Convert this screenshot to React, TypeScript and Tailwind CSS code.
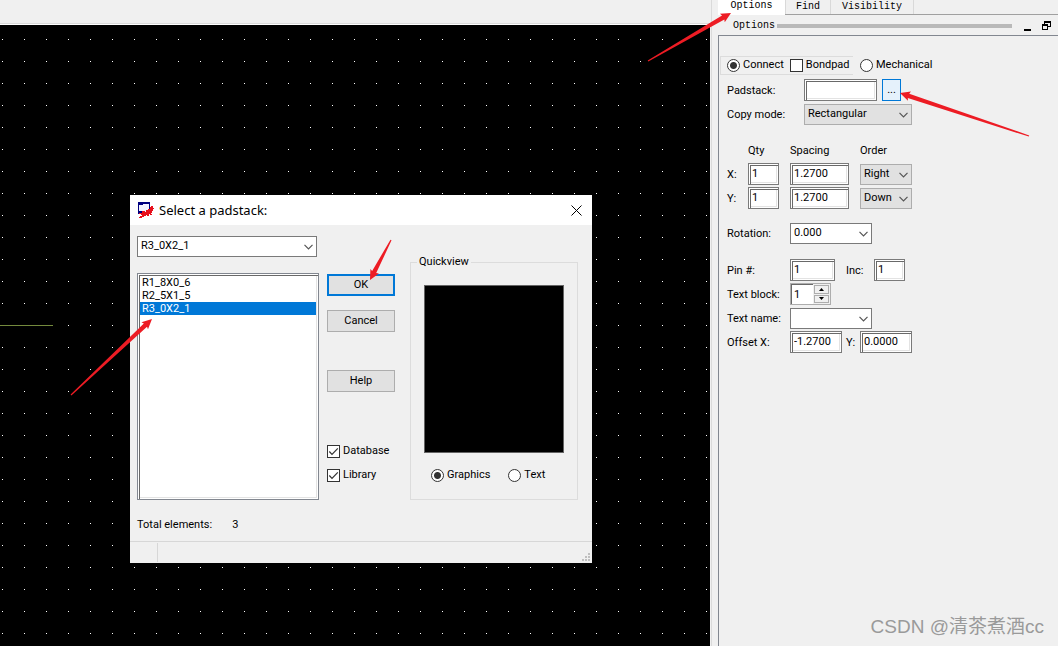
import { useState, type ReactNode } from 'react'

const sunken =
  'h-[22px] min-w-0 rounded-none border border-[#7a7a7a] bg-white px-[3px] pb-px text-black shadow-[inset_1px_1px_0_#fff,inset_2px_2px_0_#696969,inset_-1px_-1px_0_#fff,inset_-2px_-2px_0_#e3e3e3] outline-none'

function Field({ label, value, width }: { label: string; value: string; width: string }) {
  return <input aria-label={label} defaultValue={value} className={`${sunken} ${width}`} />
}

// Drop-down with its own chevron; "flat" is the grey variant that can't be typed in.
function Combo({
  label,
  options,
  width,
  flat = false,
}: {
  label: string
  options: string[]
  width: string
  flat?: boolean
}) {
  return (
    <div className={`relative ${width}`}>
      <select
        aria-label={label}
        className={`block h-[21px] w-full appearance-none rounded-none border pb-px pl-[3px] text-black outline-none ${
          flat ? 'border-[#adadad] bg-[#e1e1e1]' : 'border-[#7a7a7a] bg-white'
        }`}
      >
        {options.map((o) => (
          <option key={o}>{o}</option>
        ))}
      </select>
      <svg viewBox="0 0 9 6" className="pointer-events-none absolute top-2 right-1 h-[6px] w-[9px]" fill="none" stroke="#555">
        <path d="M.5 .8 4.5 4.8 8.5 .8" strokeWidth="1.2" />
      </svg>
    </div>
  )
}

function Radio({ name, label, checked = false }: { name: string; label: string; checked?: boolean }) {
  return (
    <label className="flex items-center gap-[3px]">
      <input
        type="radio"
        name={name}
        defaultChecked={checked}
        className="size-[13px] shrink-0 appearance-none rounded-full border border-[#333] bg-white checked:bg-[radial-gradient(circle,#333_3px,#fff_4px)]"
      />
      {label}
    </label>
  )
}

function Check({ label, checked = false }: { label: string; checked?: boolean }) {
  return (
    <label className="relative flex items-center gap-[3px]">
      <input
        type="checkbox"
        defaultChecked={checked}
        className="peer size-[13px] shrink-0 appearance-none rounded-none border border-[#333] bg-white"
      />
      <svg
        viewBox="0 0 13 13"
        className="pointer-events-none absolute left-0 hidden size-[13px] peer-checked:block"
        fill="none"
        stroke="#333"
        strokeWidth="1.2"
      >
        <path d="M2.3 6.5 5 9.3 10.8 3.3" />
      </svg>
      {label}
    </label>
  )
}

function PushButton({ children, primary = false }: { children: ReactNode; primary?: boolean }) {
  return (
    <button
      type="button"
      className={`h-[22px] w-full bg-[#e1e1e1] text-center ${
        primary ? 'border-2 border-[#0078d7]' : 'border border-[#adadad]'
      }`}
    >
      {children}
    </button>
  )
}

function Row({ label, children }: { label: string; children: ReactNode }) {
  return (
    <div className="flex h-6 items-center">
      <span className="w-[63px] shrink-0 pt-0.5">{label}</span>
      {children}
    </div>
  )
}

// Red pointer: thin at the tail, thick at the neck, with a barbed head.
function Arrow({ from, to }: { from: [number, number]; to: [number, number] }) {
  const dx = to[0] - from[0]
  const dy = to[1] - from[1]
  const len = Math.hypot(dx, dy)
  const angle = (Math.atan2(dy, dx) * 180) / Math.PI
  return (
    <path
      transform={`translate(${from[0]} ${from[1]}) rotate(${angle})`}
      d={`M0 -.6 L${len - 9} -2.3 L${len - 10} -4.8 L${len} 0 L${len - 10} 4.8 L${len - 9} 2.3 L0 .6Z`}
    />
  )
}

function Arrows() {
  return (
    <svg className="pointer-events-none absolute top-0 left-0 h-[646px] w-[1058px]" fill="#ed1c24">
      <Arrow from={[648, 61]} to={[731, 13]} />
      <Arrow from={[1029, 136]} to={[900, 93]} />
      <Arrow from={[391, 240]} to={[370, 280]} />
      <Arrow from={[71, 395]} to={[152, 319]} />
    </svg>
  )
}

function AppIcon() {
  return (
    <svg viewBox="0 0 16 16" className="size-4" shapeRendering="crispEdges">
      <path d="M0 0h12v12H0z" fill="#000080" />
      <path d="M1 2h10v8H1z" fill="#f4f4ff" />
      <path d="M1 2h4v1H1zM1 9h3v1H1z" fill="#000080" />
      <path d="M5 10h7v2H5z" fill="#fff" />
      <path
        d="M13 4h2v2h1v1h-1v2h-1v2h-1v1h1v1h-2v-1h-1v2H9v-1H8v1H6v1H4v1H1v-1h1v-1h2v-1H3v-1H1v-1h3V9h3v1h1V8h2V7h2V5h1z"
        fill="#e8101c"
      />
    </svg>
  )
}

const padstacks = ['R1_8X0_6', 'R2_5X1_5', 'R3_0X2_1']

function PadstackDialog() {
  const [selected, setSelected] = useState('R3_0X2_1')
  return (
    <section
      role="dialog"
      aria-label="Select a padstack"
      className="absolute top-[170px] left-[130px] w-[462px] bg-[#f0f0f0]"
    >
      <header className="flex h-[30px] items-center bg-white px-2">
        <AppIcon />
        <h2 className="ml-[5px] flex-1 font-['Noto_Sans',sans-serif] text-[13px]">Select a padstack:</h2>
        <button type="button" aria-label="Close" className="p-0.5">
          <svg viewBox="0 0 11 11" className="size-[11px]" stroke="#000" fill="none">
            <path d="M.5 .5 10.5 10.5M10.5 .5 .5 10.5" />
          </svg>
        </button>
      </header>

      <div className="flex items-stretch px-[7px] pt-[11px]">
        <div className="flex w-[182px] flex-col">
          <Combo label="Padstack name" options={['R3_0X2_1']} width="w-[180px]" />
          <ul
            role="listbox"
            className="mt-4 h-[227px] border border-[#828790] bg-white p-0.5 shadow-[inset_1px_1px_0_#fff,inset_2px_2px_0_#696969,inset_-1px_-1px_0_#fff,inset_-2px_-2px_0_#e3e3e3]"
          >
            {padstacks.map((p) => (
              <li
                key={p}
                role="option"
                aria-selected={p === selected}
                onClick={() => setSelected(p)}
                className={`h-[13px] pl-0.5 leading-[13px] ${p === selected ? 'bg-[#0078d7] text-white' : ''}`}
              >
                {p}
              </li>
            ))}
          </ul>
        </div>

        <div className="ml-2 flex w-[68px] flex-col pt-[38px]">
          <PushButton primary>OK</PushButton>
          <div className="mt-[14px]">
            <PushButton>Cancel</PushButton>
          </div>
          <div className="mt-[38px]">
            <PushButton>Help</PushButton>
          </div>
          <div className="mt-[51px] flex flex-col gap-2 leading-4">
            <Check label="Database" checked />
            <Check label="Library" checked />
          </div>
        </div>

        <fieldset className="mt-[19px] ml-[15px] w-[168px] border border-[#dcdcdc] px-[13px]">
          <legend className="-ml-[7px] px-0.5 leading-[14px]">Quickview</legend>
          <div className="mt-[16px] h-[168px] border border-[#646464] bg-black" />
          <div className="mt-[14px] flex gap-[18px] pl-[7px] leading-4">
            <Radio name="view" label="Graphics" checked />
            <Radio name="view" label="Text" />
          </div>
        </fieldset>
      </div>

      <p className="mt-[17px] flex gap-5 px-[7px] leading-4">
        <span>Total elements:</span>
        <span>3</span>
      </p>
      <footer className="mt-2 flex h-[22px] items-stretch justify-between border-t border-[#d7d7d7]">
        <div className="my-px w-7 border-r border-[#d7d7d7]" />
        <svg viewBox="0 0 8 8" className="mr-0.5 mb-0.5 size-2 self-end" fill="#bfbfbf">
          <path d="M6 0h2v2H6zM3 3h2v2H3zM6 3h2v2H6zM0 6h2v2H0zM3 6h2v2H3zM6 6h2v2H6z" />
        </svg>
      </footer>
    </section>
  )
}

function OptionsForm() {
  return (
    <form className="flex-1 border-t border-l border-[#828790] pt-[20px]">
      <div className="flex h-[19px] items-center">
        <div className="ml-px flex h-[19px] w-[133px] items-center border border-r-0 border-[#dcdcdc] pb-px pl-[6px]">
          <div className="flex items-center gap-[6px] whitespace-nowrap">
            <Radio name="kind" label="Connect" checked />
            <Check label="Bondpad" />
          </div>
        </div>
        <div className="ml-[7px] pb-px">
          <Radio name="kind" label="Mechanical" />
        </div>
      </div>

      <div className="mt-[3px] pl-2">
        <div className="flex h-6 items-center">
          <span className="w-[77px] pt-0.5">Padstack:</span>
          <Field label="Padstack" value="" width="w-[73px]" />
          <button type="button" className="ml-[5px] h-[22px] w-[19px] border border-[#0078d7] bg-[#e5f1fb]">
            ...
          </button>
        </div>
        <div className="flex h-6 items-center">
          <span className="w-[77px] pt-0.5">Copy mode:</span>
          <Combo label="Copy mode" options={['Rectangular', 'Polar']} width="w-[108px]" flat />
        </div>

        <div className="mt-[13px] grid w-[185px] grid-cols-[21px_42px_70px_52px] items-center">
          <span className="col-start-2 h-[23px] leading-[23px]">Qty</span>
          <span>Spacing</span>
          <span>Order</span>
          <span className="flex h-6 items-center pt-0.5">X:</span>
          <Field label="X quantity" value="1" width="w-[31px]" />
          <Field label="X spacing" value="1.2700" width="w-[59px]" />
          <Combo label="X order" options={['Right', 'Left']} width="w-[52px]" flat />
          <span className="flex h-6 items-center pt-0.5">Y:</span>
          <Field label="Y quantity" value="1" width="w-[31px]" />
          <Field label="Y spacing" value="1.2700" width="w-[59px]" />
          <Combo label="Y order" options={['Down', 'Up']} width="w-[52px]" flat />
        </div>

        <div className="mt-[11px]">
          <Row label="Rotation:">
            <Combo label="Rotation" options={['0.000', '90.000', '180.000', '270.000']} width="w-[82px]" />
          </Row>
        </div>

        <div className="mt-[13px]">
          <Row label="Pin #:">
            <Field label="Pin number" value="1" width="w-[45px]" />
            <span className="ml-[11px] w-7 pt-0.5">Inc:</span>
            <Field label="Increment" value="1" width="w-[31px]" />
          </Row>
          <Row label="Text block:">
            <div className="flex h-[22px] w-[41px] border border-[#adadad]">
              <input
                aria-label="Text block"
                defaultValue="1"
                className="w-[22px] border-t border-l border-[#696969] bg-white pl-0.5 outline-none"
              />
              <div className="flex flex-1 flex-col gap-px p-px">
                <button type="button" aria-label="Increase" className="flex flex-1 items-center justify-center border border-[#adadad]">
                  <svg viewBox="0 0 5 3" className="h-[3px] w-[5px]">
                    <path d="M0 3 2.5 0 5 3z" />
                  </svg>
                </button>
                <button type="button" aria-label="Decrease" className="flex flex-1 items-center justify-center border border-[#adadad]">
                  <svg viewBox="0 0 5 3" className="h-[3px] w-[5px]">
                    <path d="M0 0 2.5 3 5 0z" />
                  </svg>
                </button>
              </div>
            </div>
          </Row>
          <Row label="Text name:">
            <Combo label="Text name" options={['']} width="w-[82px]" />
          </Row>
          <Row label="Offset X:">
            <Field label="Offset X" value="-1.2700" width="w-[52px]" />
            <span className="w-[18px] pt-0.5 pl-1">Y:</span>
            <Field label="Offset Y" value="0.0000" width="w-[52px]" />
          </Row>
        </div>
      </div>
    </form>
  )
}

function SidePanel() {
  return (
    <aside className="flex w-[347px] shrink-0 flex-col border-l border-[#dadada] pl-[6px]">
      <nav className="flex h-[15px] border-b border-[#a0a0a0] font-['Liberation_Mono',monospace] text-[10px] leading-3">
        <button type="button" className="-mb-px w-[67px] bg-white pb-[3px]">
          Options
        </button>
        <button type="button" className="w-[46px] border-r border-l border-[#d9d9d9]">
          Find
        </button>
        <button type="button" className="w-[83px] border-r border-[#d9d9d9]">
          Visibility
        </button>
      </nav>
      <div className="flex h-5 items-center pt-px pl-[15px] font-['Liberation_Mono',monospace] text-[10px]">
        <h1>Options</h1>
        <div className="ml-0.5 h-1 w-[235px] bg-[#b9b9b9]" />
        <button type="button" aria-label="Minimize" className="ml-3">
          <svg viewBox="0 0 7 10" className="h-[10px] w-[7px]">
            <path d="M0 8h7v2H0z" />
          </svg>
        </button>
        <button type="button" aria-label="Restore" className="ml-[11px]">
          <svg viewBox="0 0 9 9" className="size-[9px]" fill="none" stroke="#000" shapeRendering="crispEdges">
            <path d="M2.5 3V.5h6v5H6M2 1.5h7M.5 3.5h5v5h-5zM0 4.5h6" />
          </svg>
        </button>
      </div>
      <OptionsForm />
    </aside>
  )
}

export default function App() {
  return (
    <div className="relative flex min-h-screen overflow-hidden bg-[#f0f0f0] font-['Roboto','Liberation_Sans',sans-serif] text-[11px] leading-4 text-black">
      <main className="flex min-w-0 flex-1 flex-col">
        <div className="h-[25px] border-b border-white shadow-[inset_0_-1px_0_#dadada]" />
        {/* drawing area with the snap grid */}
        <div className="relative mr-px flex-1 bg-black bg-[linear-gradient(90deg,#000_2px,transparent_2px,transparent_3px,#000_3px),linear-gradient(#000_14px,#fff_14px,#fff_15px,#000_15px)] bg-size-[22px_22px]">
          <div className="absolute top-[300px] left-0 h-px w-[53px] bg-[#748a3d]" />
          <PadstackDialog />
        </div>
      </main>
      <SidePanel />
      <p className="absolute right-[14px] bottom-[7px] font-['Liberation_Sans','Noto_Sans_CJK_SC',sans-serif] text-[19px] leading-6 text-[#9a9a9a]">
        CSDN @清茶煮酒cc
      </p>
      <Arrows />
    </div>
  )
}
